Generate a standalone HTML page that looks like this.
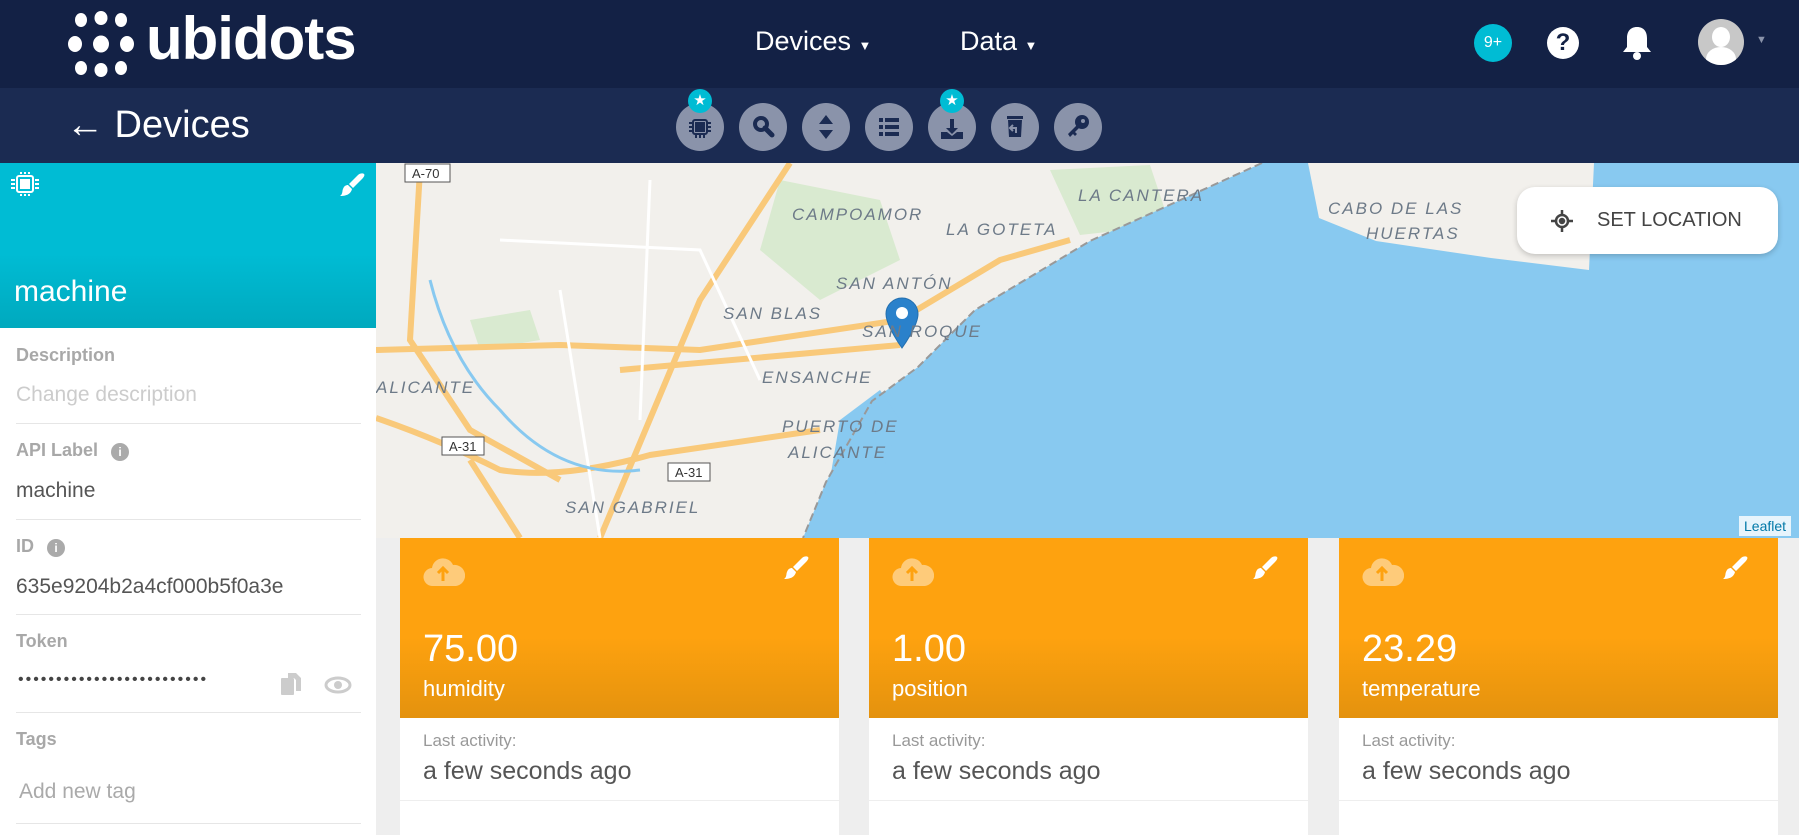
<!DOCTYPE html>
<html><head><meta charset="utf-8"><style>
*{box-sizing:border-box;margin:0;padding:0}
body{width:1799px;height:835px;overflow:hidden;background:#eee;font-family:"Liberation Sans",sans-serif;position:relative}
.top{position:absolute;left:0;top:0;width:1799px;height:88px;background:#132145}
.sub{position:absolute;left:0;top:88px;width:1799px;height:75px;background:#1b2b52}
.abs{position:absolute}
.nav{color:#fff;font-size:27px;font-weight:300}
.tb{position:absolute;top:103px;width:48px;height:48px;border-radius:50%;background:#8a93aa}
.tb svg{position:absolute;left:0;top:0}
.star{position:absolute;top:-14px;left:12px;width:24px;height:24px;border-radius:50%;background:#00bcd4;color:#fff;font-size:15px;text-align:center;line-height:24px}
.side{position:absolute;left:0;top:163px;width:376px;height:672px;background:#fff}
.sh{height:165px;background:linear-gradient(#00bcd4 55%,#00a9be);position:relative}
.lbl{position:absolute;left:16px;font-size:18px;font-weight:bold;color:#a8a8a8}
.val{position:absolute;left:16px;font-size:21px;color:#555}
.ln{position:absolute;left:16px;width:345px;height:1px;background:#e6e6e6}
.card{position:absolute;top:538px;width:439px;height:297px;background:#fff}
.ct{height:180px;background:linear-gradient(#fea20f 55%,#e4920e);position:relative;color:#fff}
.num{position:absolute;left:23px;top:90px;font-size:38px;font-weight:300}
.nm{position:absolute;left:23px;top:138px;font-size:22px}
.la{position:absolute;left:23px;top:193px;font-size:17px;color:#999}
.ag{position:absolute;left:23px;top:219px;font-size:25px;color:#555}
.cl{position:absolute;left:0;top:262px;width:100%;height:1px;background:#eee}
.ml{position:absolute;font-size:17px;color:#6d7a88;letter-spacing:2px;font-style:italic}
</style></head><body>
<div class="top"></div><div class="sub"></div>
<svg class="abs" style="left:68px;top:10px" width="66" height="68" viewBox="0 0 66 68" fill="#fff">
<ellipse cx="13" cy="10" rx="6" ry="7"/><ellipse cx="33" cy="8" rx="6.5" ry="7"/><ellipse cx="53" cy="10" rx="6" ry="7"/>
<ellipse cx="7" cy="34" rx="7" ry="8"/><ellipse cx="33" cy="34" rx="8" ry="8.5"/><ellipse cx="59" cy="34" rx="7" ry="8"/>
<ellipse cx="13" cy="58" rx="6" ry="7"/><ellipse cx="33" cy="60" rx="6.5" ry="7"/><ellipse cx="53" cy="58" rx="6" ry="7"/></svg>
<div class="abs" style="left:146px;top:4px;color:#fff;font-size:60px;font-weight:bold;letter-spacing:-1px">ubidots</div>
<div class="abs nav" style="left:755px;top:26px">Devices <span style="font-size:13px">▼</span></div>
<div class="abs nav" style="left:960px;top:26px">Data <span style="font-size:13px">▼</span></div>
<div class="abs" style="left:1474px;top:24px;width:38px;height:38px;border-radius:50%;background:#00bcd4;color:#fff;font-size:16px;text-align:center;line-height:38px">9+</div>
<div class="abs" style="left:1547px;top:27px;width:32px;height:32px;border-radius:50%;background:#fff;color:#132145;font-size:24px;font-weight:bold;text-align:center;line-height:32px">?</div>
<svg class="abs" style="left:1621px;top:25px" width="32" height="36" viewBox="0 0 32 36" fill="#fff"><path d="M16 2c-7 0-10 5-10 11v9l-4 5h28l-4-5v-9c0-6-3-11-10-11z"/><circle cx="16" cy="31" r="4"/></svg>
<div class="abs" style="left:1698px;top:19px;width:46px;height:46px;border-radius:50%;background:#c8c8c8;overflow:hidden"><div class="abs" style="left:14px;top:8px;width:18px;height:20px;border-radius:50%;background:#fff"></div><div class="abs" style="left:8px;top:28px;width:30px;height:24px;border-radius:50% 50% 0 0;background:#fff"></div></div>
<div class="abs" style="left:1756px;top:34px;color:#8a93aa;font-size:11px">▼</div>
<div class="abs" style="left:66px;top:104px;color:#fff;font-size:38px;font-weight:300">← Devices</div>
<div class="tb" style="left:676px"><div class="star">★</div><svg width="48" height="48" fill="none" stroke="#1b2b52" stroke-width="2"><rect x="17" y="17" width="14" height="14" rx="2"/><rect x="20" y="20" width="8" height="8" fill="#1b2b52"/><path d="M13 20h3M13 24h3M13 28h3M32 20h3M32 24h3M32 28h3M20 32v3M24 32v3M28 32v3"/></svg></div>
<div class="tb" style="left:739px"><svg width="48" height="48"><circle cx="22" cy="21" r="6" fill="none" stroke="#1b2b52" stroke-width="4"/><path d="M26 25l7 7" stroke="#1b2b52" stroke-width="5" stroke-linecap="round"/></svg></div>
<div class="tb" style="left:802px"><svg width="48" height="48" fill="#1b2b52"><path d="M24 12l7 9h-14zM24 36l7-9h-14z"/></svg></div>
<div class="tb" style="left:865px"><svg width="48" height="48" fill="#1b2b52"><rect x="14" y="15" width="4" height="4"/><rect x="14" y="22" width="4" height="4"/><rect x="14" y="29" width="4" height="4"/><rect x="20" y="15" width="14" height="4"/><rect x="20" y="22" width="14" height="4"/><rect x="20" y="29" width="14" height="4"/></svg></div>
<div class="tb" style="left:928px"><div class="star">★</div><svg width="48" height="48" fill="#1b2b52"><path d="M22 16h4v9h4l-6 6-6-6h4z"/><path d="M13 29h6l5 4 5-4h6v7h-22z"/></svg></div>
<div class="tb" style="left:991px"><svg width="48" height="48" fill="#1b2b52"><rect x="16" y="13" width="16" height="3"/><path d="M17 17h14l-1 17h-12z"/><path d="M22 22l-3 3 3 3M19 25h6v5" stroke="#8a93aa" stroke-width="2" fill="none"/></svg></div>
<div class="tb" style="left:1054px"><svg width="48" height="48" fill="#1b2b52"><circle cx="28" cy="19" r="7"/><path d="M24 21l-10 10 2 3 3-3 2 2 2-2-2-2 5-5z"/><circle cx="29" cy="18" r="2" fill="#8a93aa"/></svg></div>

<svg class="abs" style="left:376px;top:163px" width="1423" height="375" viewBox="376 163 1423 375">
<rect x="376" y="163" width="1423" height="375" fill="#f2f0ec"/>
<path d="M780 180 L880 200 L900 260 L820 300 L760 250Z M470 320 l60 -10 l10 30 l-60 10z M1050 170 l100 -5 l20 60 l-90 10z" fill="#d9ead0"/>
<path d="M1262 163 L1308 163 L1319 218 L1376 241 L1491 258 L1589 270 L1594 163 L1799 163 L1799 538 L803 538 L826 482 L872 401 L918 367 L975 310 L1090 241Z" fill="#88c9f0"/>
<path d="M840 420 L880 390 L900 420 L860 538 L820 538Z" fill="#88c9f0"/>
<g fill="none" stroke="#f9c97a" stroke-width="6">
<path d="M420 170 L410 340 L470 430 L560 480"/><path d="M376 350 L560 345 L700 350 L900 320 L1000 260 L1070 240"/>
<path d="M376 418 Q440 440 500 470 Q560 480 650 455 L820 430"/><path d="M790 163 L700 300 L600 538"/>
<path d="M620 370 L900 345"/><path d="M470 460 L520 538"/></g>
<g fill="none" stroke="#fff" stroke-width="3"><path d="M500 240 L700 250 L760 380"/><path d="M560 290 L600 538"/><path d="M650 180 L640 420"/></g>
<path d="M430 280 Q450 360 500 410 Q560 480 640 470" fill="none" stroke="#88c9f0" stroke-width="3"/>
<path d="M1262 163 L1090 241 L975 310 L918 367 L872 401 L826 482 L803 538" fill="none" stroke="#999" stroke-width="2" stroke-dasharray="8 4"/>
<g font-family="Liberation Sans" font-size="13" fill="#333"><rect x="405" y="164" width="45" height="18" fill="#fff" stroke="#555"/><text x="412" y="178">A-70</text>
<rect x="442" y="437" width="42" height="18" fill="#fff" stroke="#555"/><text x="449" y="451">A-31</text>
<rect x="668" y="463" width="42" height="18" fill="#fff" stroke="#555"/><text x="675" y="477">A-31</text></g>
<path d="M902 298 a16 16 0 0 1 16 16 c0 12 -16 34 -16 34 c0 0 -16 -22 -16 -34 a16 16 0 0 1 16 -16z" fill="#2a81cb" stroke="#246fae"/><circle cx="902" cy="313" r="6" fill="#fff"/>
</svg>
<div class="ml" style="left:792px;top:205px">CAMPOAMOR</div>
<div class="ml" style="left:946px;top:220px">LA GOTETA</div>
<div class="ml" style="left:1078px;top:186px">LA CANTERA</div>
<div class="ml" style="left:1328px;top:199px">CABO DE LAS</div>
<div class="ml" style="left:1366px;top:224px">HUERTAS</div>
<div class="ml" style="left:836px;top:274px">SAN ANTÓN</div>
<div class="ml" style="left:723px;top:304px">SAN BLAS</div>
<div class="ml" style="left:862px;top:322px">SAN ROQUE</div>
<div class="ml" style="left:376px;top:378px">ALICANTE</div>
<div class="ml" style="left:762px;top:368px">ENSANCHE</div>
<div class="ml" style="left:782px;top:417px">PUERTO DE</div>
<div class="ml" style="left:788px;top:443px">ALICANTE</div>
<div class="ml" style="left:565px;top:498px">SAN GABRIEL</div>
<div class="abs" style="left:1739px;top:516px;background:rgba(255,255,255,.8);font-size:14px;color:#0078a8;padding:2px 5px">Leaflet</div>
<div class="abs" style="left:1517px;top:187px;width:261px;height:67px;background:#fff;border-radius:18px;box-shadow:0 2px 6px rgba(0,0,0,.2);font-size:20px;color:#444;line-height:67px;padding-left:80px">SET LOCATION<svg class="abs" style="left:33px;top:22px" width="24" height="24" fill="none" stroke="#444" stroke-width="2.5"><circle cx="12" cy="12" r="6"/><circle cx="12" cy="12" r="2" fill="#444"/><path d="M12 1v5M12 18v5M1 12h5M18 12h5"/></svg></div>

<div class="side"><div class="sh">
<svg class="abs" style="left:8px;top:8px" width="34" height="26" viewBox="0 0 34 26" fill="none" stroke="#fff" stroke-width="2"><rect x="9" y="5" width="16" height="16" rx="2"/><rect x="13" y="9" width="8" height="8" fill="#fff"/><path d="M3 9h4M3 13h4M3 17h4M27 9h4M27 13h4M27 17h4M13 1v2M17 1v2M21 1v2M13 23v2M17 23v2M21 23v2"/></svg>
<svg class="abs" style="left:338px;top:10px" width="28" height="26" viewBox="0 0 28 26" fill="#fff"><path d="M26 1c1 1 0 3-2 5l-9 9-4-4 9-9c2-2 5-2 6-1z"/><path d="M10 12l4 4c-1 4-4 7-12 7 3-2 2-5 3-7 1-3 3-4 5-4z"/></svg>
<div class="abs" style="left:14px;top:112px;color:#fff;font-size:30px;font-weight:300">machine</div></div>
<div class="lbl" style="top:182px">Description</div>
<div class="val" style="top:220px;color:#ccc">Change description</div><div class="ln" style="top:260px"></div>
<div class="lbl" style="top:277px">API Label <span style="display:inline-block;width:18px;height:18px;border-radius:50%;background:#aaa;color:#fff;font-size:12px;text-align:center;line-height:18px;margin-left:8px">i</span></div>
<div class="val" style="top:316px">machine</div><div class="ln" style="top:356px"></div>
<div class="lbl" style="top:373px">ID <span style="display:inline-block;width:18px;height:18px;border-radius:50%;background:#aaa;color:#fff;font-size:12px;text-align:center;line-height:18px;margin-left:8px">i</span></div>
<div class="val" style="top:412px">635e9204b2a4cf000b5f0a3e</div><div class="ln" style="top:451px"></div>
<div class="lbl" style="top:468px">Token</div>
<div class="val" style="top:508px;font-size:16px;letter-spacing:2px;color:#444;left:18px">•••••••••••••••••••••••••</div>
<svg class="abs" style="left:280px;top:509px" width="24" height="24" fill="#ccc"><rect x="1" y="6" width="13" height="17" rx="1"/><path d="M8 1h8l5 5v13h-5v-11l-2-2h-6z"/></svg>
<svg class="abs" style="left:324px;top:512px" width="28" height="20"><ellipse cx="14" cy="10" rx="12" ry="7" fill="none" stroke="#ccc" stroke-width="3"/><circle cx="14" cy="10" r="4" fill="#ccc"/></svg>
<div class="ln" style="top:549px"></div>
<div class="lbl" style="top:566px">Tags</div>
<div class="val" style="top:617px;color:#aaa;left:19px">Add new tag</div><div class="ln" style="top:660px"></div>
</div>

<div class="card" style="left:400px"><div class="ct"><svg class="abs" style="left:23px;top:18px" width="42" height="32" viewBox="0 0 42 32"><path d="M10 30a9 9 0 0 1-1-18 11 11 0 0 1 21-3 9 9 0 0 1 3 21z" fill="#fecb7a"/><path d="M20 25v-12M15 17l5-5 5 5" stroke="#fea20f" stroke-width="3" fill="none"/></svg><svg class="abs" style="left:382px;top:18px" width="28" height="26" viewBox="0 0 28 26" fill="#fff"><path d="M26 1c1 1 0 3-2 5l-9 9-4-4 9-9c2-2 5-2 6-1z"/><path d="M10 12l4 4c-1 4-4 7-12 7 3-2 2-5 3-7 1-3 3-4 5-4z"/></svg><div class="num">75.00</div><div class="nm">humidity</div></div><div class="la">Last activity:</div><div class="ag">a few seconds ago</div><div class="cl"></div></div>
<div class="card" style="left:869px"><div class="ct"><svg class="abs" style="left:23px;top:18px" width="42" height="32" viewBox="0 0 42 32"><path d="M10 30a9 9 0 0 1-1-18 11 11 0 0 1 21-3 9 9 0 0 1 3 21z" fill="#fecb7a"/><path d="M20 25v-12M15 17l5-5 5 5" stroke="#fea20f" stroke-width="3" fill="none"/></svg><svg class="abs" style="left:382px;top:18px" width="28" height="26" viewBox="0 0 28 26" fill="#fff"><path d="M26 1c1 1 0 3-2 5l-9 9-4-4 9-9c2-2 5-2 6-1z"/><path d="M10 12l4 4c-1 4-4 7-12 7 3-2 2-5 3-7 1-3 3-4 5-4z"/></svg><div class="num">1.00</div><div class="nm">position</div></div><div class="la">Last activity:</div><div class="ag">a few seconds ago</div><div class="cl"></div></div>
<div class="card" style="left:1339px"><div class="ct"><svg class="abs" style="left:23px;top:18px" width="42" height="32" viewBox="0 0 42 32"><path d="M10 30a9 9 0 0 1-1-18 11 11 0 0 1 21-3 9 9 0 0 1 3 21z" fill="#fecb7a"/><path d="M20 25v-12M15 17l5-5 5 5" stroke="#fea20f" stroke-width="3" fill="none"/></svg><svg class="abs" style="left:382px;top:18px" width="28" height="26" viewBox="0 0 28 26" fill="#fff"><path d="M26 1c1 1 0 3-2 5l-9 9-4-4 9-9c2-2 5-2 6-1z"/><path d="M10 12l4 4c-1 4-4 7-12 7 3-2 2-5 3-7 1-3 3-4 5-4z"/></svg><div class="num">23.29</div><div class="nm">temperature</div></div><div class="la">Last activity:</div><div class="ag">a few seconds ago</div><div class="cl"></div></div>
</body></html>
